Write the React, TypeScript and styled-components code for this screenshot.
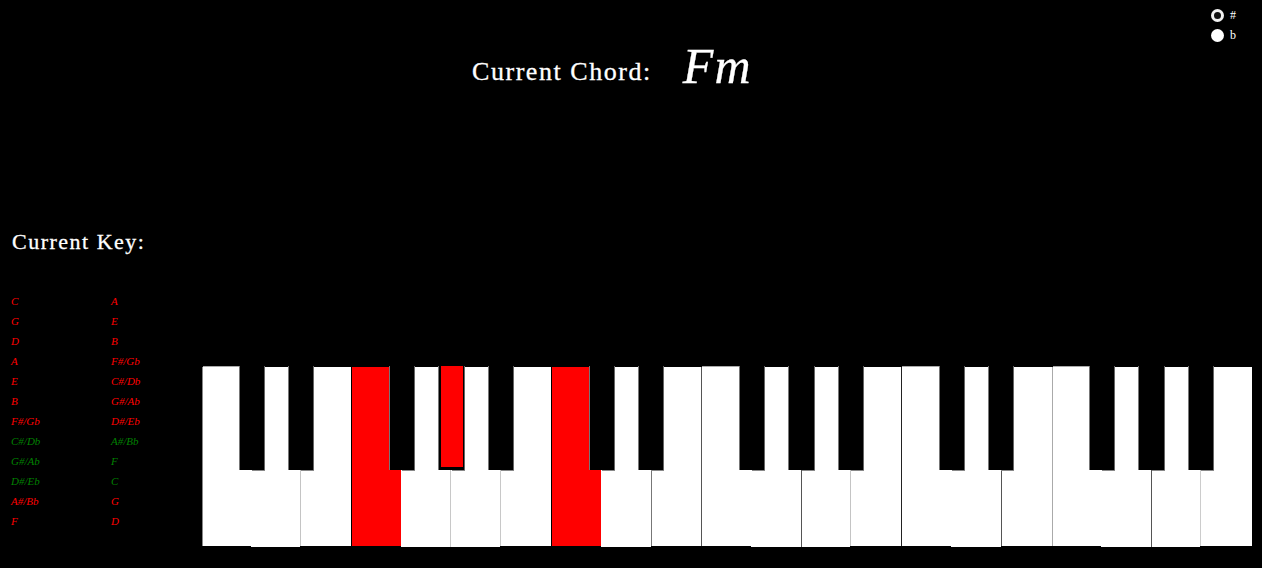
import React from "react";
import styled, { createGlobalStyle } from "styled-components";

const Global = createGlobalStyle`
  html, body { margin: 0; padding: 0; background: #000; }
  #root { width: 1262px; height: 568px; overflow: hidden; }
`;

const Page = styled.div`
  width: 1262px; height: 568px; background: #000; color: #fff;
  display: flex; flex-direction: column;
  font-family: "Liberation Serif", "Times New Roman", serif;
`;
const Top = styled.header`display: flex; align-items: flex-start; height: 226px;`;
const Chord = styled.div`
  display: flex; align-items: flex-start; margin: 35px 0 0 472px; height: 60px;
`;
const ChordLabel = styled.span`font-size: 26px; letter-spacing: 1.55px; line-height: 60px; margin-top: 7px; -webkit-text-stroke: 0.3px #fff;`;
const ChordName = styled.span`font-size: 50px; font-style: italic; margin: 1px 0 0 31px; letter-spacing: 1px; line-height: 60px; -webkit-text-stroke: 0.3px #fff;`;
const Options = styled.form`
  margin-left: auto; width: 51px; padding-top: 5px; display: flex; flex-direction: column;
`;
const Option = styled.label`display: flex; align-items: center; height: 20px; font-size: 12px; gap: 6px;`;
const Radio = styled.input`
  appearance: none; margin: 0; width: 13px; height: 13px; border-radius: 50%; background: #fff; flex: none;
  border: 0; box-sizing: border-box;
  &:checked { border: 3.5px solid #f2f2f2; background: #111; }
`;

const Main = styled.main`display: flex; flex: 1;`;
const Side = styled.aside`width: 202px; flex: none; padding-left: 11px; box-sizing: border-box;`;
const KeyTitle = styled.h2`margin: 0 0 0 1px; font-size: 22px; font-weight: 400; letter-spacing: 1.5px; line-height: 32px; -webkit-text-stroke: 0.3px #fff;`;
const KeyList = styled.ul`
  list-style: none; margin: 33px 0 0; padding: 0;
  display: grid; grid-template-columns: 100px 90px; grid-auto-rows: 20px;
`;
const KeyItem = styled.li<{ $on: boolean }>`
  font-size: 11px; font-style: italic; line-height: 20px; color: ${(p) => (p.$on ? "#008000" : "#f00")};
`;

const Keyboard = styled.div`position: relative; display: flex; margin-top: 140px; height: 181px; width: 1050px; align-items: flex-start;`;
const WhiteKey = styled.div<{ $w: number; $line: string; $tall: boolean; $hi: boolean; $cap: boolean }>`
  width: ${(p) => p.$w}px; flex: none; box-sizing: border-box; height: ${(p) => (p.$tall ? 180 : 179)}px; margin-top: 1px;
  background: ${(p) => (p.$hi ? "#f00" : "#fff")};
  border-left: ${(p) => (p.$line === "none" ? "0" : `1px solid ${p.$line}`)};
  position: relative;
  ${(p) => p.$cap && `&::before { content: ""; position: absolute; top: -1px; left: 0; width: 38px; height: 1px; background: #aaa; }`}
`;
const BlackKey = styled.div<{ $x: number; $w: number }>`
  position: absolute; top: 0; left: ${(p) => p.$x}px; width: ${(p) => p.$w}px; height: 104px; background: #000;
  box-sizing: border-box; border-left: 1px solid #777; border-right: 1px solid #666;
  &::after { content: ""; position: absolute; top: 104px; right: -1px; width: 13px; height: 1px; background: #888; }
`;
const BlackPressed = styled.div`
  position: absolute; top: 0; left: 2px; right: 1px; height: 101px; background: #f00;
`;

const keys: [string, boolean][][] = [
  [["C", false], ["A", false]],
  [["G", false], ["E", false]],
  [["D", false], ["B", false]],
  [["A", false], ["F#/Gb", false]],
  [["E", false], ["C#/Db", false]],
  [["B", false], ["G#/Ab", false]],
  [["F#/Gb", false], ["D#/Eb", false]],
  [["C#/Db", true], ["A#/Bb", true]],
  [["G#/Ab", true], ["F", true]],
  [["D#/Eb", true], ["C", true]],
  [["A#/Bb", false], ["G", false]],
  [["F", false], ["D", false]],
];

// width, left divider colour, extends 1px lower, pressed, has top edge
const whites: [number, string, boolean, boolean, boolean][] = [
  [49, "#888", false, false, true],
  [49, "none", true, false, false],
  [51, "#c4c4c4", false, false, false],
  [50, "#000", false, true, false],
  [49, "none", true, false, false],
  [50, "#c8c8c8", true, false, false],
  [51, "#c8c8c8", false, false, false],
  [50, "#000", false, true, false],
  [50, "none", true, false, false],
  [50, "#777", false, false, false],
  [50, "#555", false, false, true],
  [50, "none", true, false, false],
  [49, "#555", true, false, false],
  [51, "#c4c4c4", false, false, false],
  [50, "#222", false, false, true],
  [50, "none", true, false, false],
  [51, "#555", false, false, false],
  [49, "#aaa", false, false, true],
  [50, "none", true, false, false],
  [49, "#555", true, false, false],
  [52, "#ccc", false, false, false],
];

const blacks: [number, number][] = [
  [239, 26], [288, 26], [389, 26], [438, 27], [488, 26], [589, 26], [638, 26], [739, 26],
  [788, 27], [838, 26], [939, 26], [988, 26], [1089, 26], [1138, 27], [1188, 26],
];

export default function App() {
  return (
    <Page>
      <Global />
      <Top>
        <Chord>
          <ChordLabel>Current Chord:</ChordLabel>
          <ChordName>Fm</ChordName>
        </Chord>
        <Options>
          <Option><Radio type="radio" name="acc" defaultChecked />#</Option>
          <Option><Radio type="radio" name="acc" />b</Option>
        </Options>
      </Top>
      <Main>
        <Side>
          <KeyTitle>Current Key:</KeyTitle>
          <KeyList>
            {keys.flat().map(([k, on], i) => (
              <KeyItem key={i} $on={on}>{k}</KeyItem>
            ))}
          </KeyList>
        </Side>
        <Keyboard>
          {whites.map(([w, line, tall, hi, cap], i) => (
            <WhiteKey key={i} $w={w} $line={line} $tall={tall} $hi={hi} $cap={cap} />
          ))}
          {blacks.map(([x, w]) => (
            <BlackKey key={x} $x={x - 202} $w={w}>
              {x === 438 && <BlackPressed />}
            </BlackKey>
          ))}
        </Keyboard>
      </Main>
    </Page>
  );
}
